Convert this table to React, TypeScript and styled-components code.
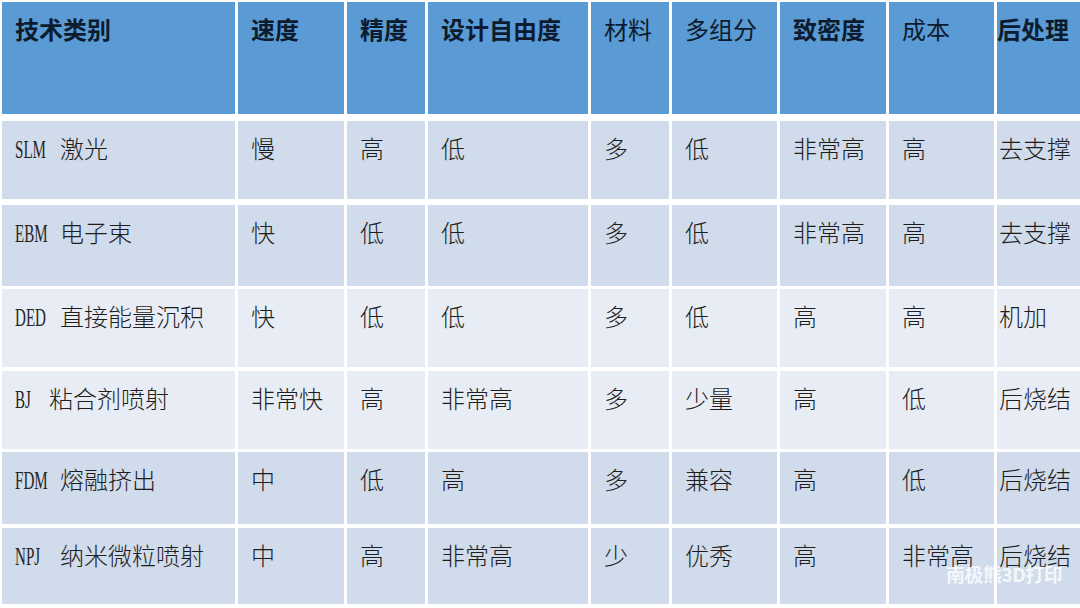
import React from 'react';
import styled, { createGlobalStyle } from 'styled-components';

const GlobalStyle = createGlobalStyle`
  html, body {
    margin: 0;
    padding: 0;
    background: #ffffff;
    overflow: hidden;
  }
  body {
    font-family: 'Liberation Serif', 'Noto Sans CJK SC', serif;
  }
`;

const COLUMNS = '233px 106px 78px 160px 78px 105px 106px 105px 83px';

interface IColumn {
  title: string;
  bold: boolean;
}

const HEADERS: IColumn[] = [
  { title: '技术类别', bold: true },
  { title: '速度', bold: true },
  { title: '精度', bold: true },
  { title: '设计自由度', bold: true },
  { title: '材料', bold: false },
  { title: '多组分', bold: false },
  { title: '致密度', bold: true },
  { title: '成本', bold: false },
  { title: '后处理', bold: true },
];

interface IRow {
  code: string;
  name: string;
  cells: string[];
  shade: 'dark' | 'light';
  height: number;
  gap: number;
}

const ROWS: IRow[] = [
  { code: 'SLM', name: '激光', cells: ['慢', '高', '低', '多', '低', '非常高', '高', '去支撑'], shade: 'dark', height: 78, gap: 7 },
  { code: 'EBM', name: '电子束', cells: ['快', '低', '低', '多', '低', '非常高', '高', '去支撑'], shade: 'dark', height: 81, gap: 6 },
  { code: 'DED', name: '直接能量沉积', cells: ['快', '低', '低', '多', '低', '高', '高', '机加'], shade: 'light', height: 78, gap: 3 },
  { code: 'BJ', name: '粘合剂喷射', cells: ['非常快', '高', '非常高', '多', '少量', '高', '低', '后烧结'], shade: 'light', height: 78, gap: 4 },
  { code: 'FDM', name: '熔融挤出', cells: ['中', '低', '高', '多', '兼容', '高', '低', '后烧结'], shade: 'dark', height: 72, gap: 3 },
  { code: 'NPJ', name: '纳米微粒喷射', cells: ['中', '高', '非常高', '少', '优秀', '高', '非常高', '后烧结'], shade: 'dark', height: 76, gap: 4 },
];

export default function App() {
  return (
    <>
      <GlobalStyle />
      <Page>
        <Table>
          <Row $height={112} $gap={2}>
            {HEADERS.map((col, idx) => (
              <HeadCell key={col.title} $bold={col.bold} $last={idx === HEADERS.length - 1}>
                {col.title}
              </HeadCell>
            ))}
          </Row>
          {ROWS.map((row) => (
            <Row key={row.code} $height={row.height} $gap={row.gap}>
              <Cell $shade={row.shade} $last={false}>
                <Code $chars={row.code.length}>
                  <CodeText>{row.code}</CodeText>
                </Code>
                {row.name}
              </Cell>
              {row.cells.map((text, cIdx) => (
                <Cell key={cIdx} $shade={row.shade} $last={cIdx === row.cells.length - 1}>
                  {text}
                </Cell>
              ))}
            </Row>
          ))}
        </Table>
        <Watermark>南极熊3D打印</Watermark>
      </Page>
    </>
  );
}

const Page = styled.div`
  position: relative;
  width: 1080px;
  height: 608px;
  overflow: hidden;
  background: #ffffff;
`;

const Table = styled.div`
  display: flex;
  flex-direction: column;
  padding-left: 2px;
`;

const Row = styled.div<{ $height: number; $gap: number }>`
  display: grid;
  grid-template-columns: ${COLUMNS};
  column-gap: 3px;
  height: ${(p) => p.$height}px;
  margin-top: ${(p) => p.$gap}px;
`;

const HeadCell = styled.div<{ $bold: boolean; $last: boolean }>`
  background: #5b9bd5;
  color: #0d1b2e;
  font-size: 24px;
  line-height: 28px;
  font-weight: ${(p) => (p.$bold ? 700 : 400)};
  padding: 15px 0 0 ${(p) => (p.$last ? 0 : 13)}px;
  white-space: nowrap;
  overflow: hidden;
`;

const Cell = styled.div<{ $shade: 'dark' | 'light'; $last: boolean }>`
  background: ${(p) => (p.$shade === 'dark' ? '#d0dbeb' : '#e8edf5')};
  color: #1e1e1e;
  font-size: 24px;
  line-height: 28px;
  font-weight: 300;
  padding: 15px 0 0 ${(p) => (p.$last ? 2 : 13)}px;
  white-space: nowrap;
  overflow: hidden;
`;

/* half-width latin slot, like the narrow latin of a Song typeface */
const Code = styled.span<{ $chars: number }>`
  display: inline-block;
  width: ${(p) => (p.$chars + 1) * 11 + 1}px;
  vertical-align: top;
`;

const CodeText = styled.span`
  display: inline-block;
  font-family: 'Liberation Serif', serif;
  font-size: 26px;
  font-weight: 400;
  color: #262626;
  transform: scaleX(0.58);
  transform-origin: 0 50%;
  margin-top: -1px;
`;

const Watermark = styled.div`
  position: absolute;
  left: 946px;
  top: 560px;
  font-family: 'Noto Sans CJK SC', sans-serif;
  font-size: 19px;
  font-weight: 700;
  color: rgba(255, 255, 255, 0.8);
  letter-spacing: -0.5px;
`;
